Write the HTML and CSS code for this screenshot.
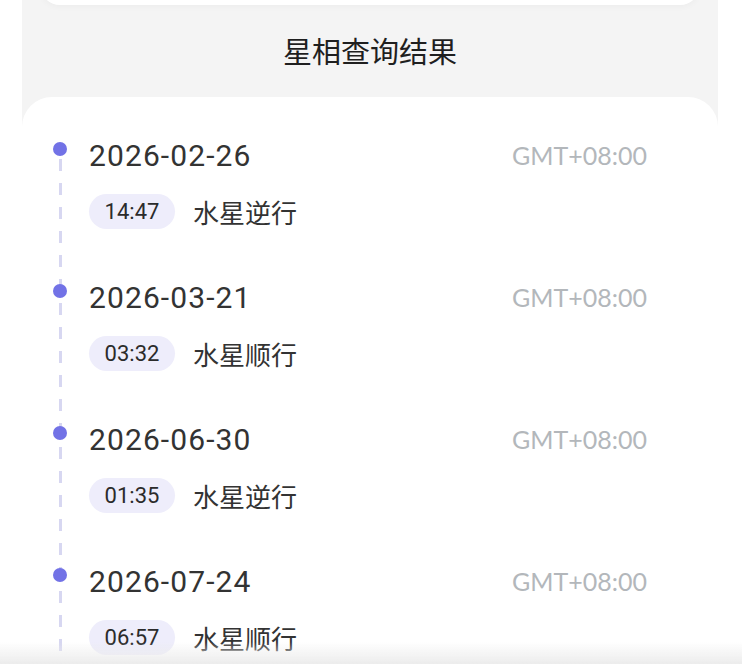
FILE: index.html
```html
<!DOCTYPE html>
<html>
<head>
<meta charset="utf-8">
<meta name="viewport" content="width=device-width, initial-scale=1.0">
<title>星相查询结果</title>
<link rel="stylesheet" href="styles.css">
</head>
<body>
<div id="wrapper">
  <div class="prevCard"></div>
  <h1>星相查询结果</h1>
  <div class="resultCard">
    <div class="timeline">
      <div class="item">
        <span class="dot"></span>
        <div class="dateRow">
          <span class="date">2026-02-26</span>
          <span class="zone">GMT+08:00</span>
        </div>
        <div class="infoRow">
          <span class="time">14:47</span>
          <span class="event">水星逆行</span>
        </div>
      </div>
      <div class="item">
        <span class="dot"></span>
        <div class="dateRow">
          <span class="date">2026-03-21</span>
          <span class="zone">GMT+08:00</span>
        </div>
        <div class="infoRow">
          <span class="time">03:32</span>
          <span class="event">水星顺行</span>
        </div>
      </div>
      <div class="item">
        <span class="dot"></span>
        <div class="dateRow">
          <span class="date">2026-06-30</span>
          <span class="zone">GMT+08:00</span>
        </div>
        <div class="infoRow">
          <span class="time">01:35</span>
          <span class="event">水星逆行</span>
        </div>
      </div>
      <div class="item">
        <span class="dot"></span>
        <div class="dateRow">
          <span class="date">2026-07-24</span>
          <span class="zone">GMT+08:00</span>
        </div>
        <div class="infoRow">
          <span class="time">06:57</span>
          <span class="event">水星顺行</span>
        </div>
      </div>
    </div>
  </div>
</div>
<div class="bottomShade"></div>
</body>
</html>
```

FILE: styles.css
```css
html,body {
  margin: 0px;
  padding: 0px;
  background: #fff;
  font-family: Roboto, "Noto Sans CJK SC", sans-serif;
  color: #333;
  overflow: hidden;
}
#wrapper {
  display: flow-root;
  margin: 0 24px 0 22px;
  background: linear-gradient(#f4f4f4 0, #f4f4f4 128px, #fff 128px);
}
.prevCard {
  margin: -20px 18px 0 18px;
  height: 25px;
  background: #fff;
  border-radius: 0 0 20px 20px;
  box-shadow: 0 2px 6px rgba(0,0,0,0.03);
}
h1 {
  margin: 25px 0 0 0;
  height: 40px;
  line-height: 40px;
  text-align: center;
  font-size: 29px;
  font-weight: normal;
  color: #1f1f1f;
  font-family: "Noto Sans CJK SC", sans-serif;
}
.resultCard {
  margin-top: 27px;
  background: #fff;
  border-radius: 30px 30px 0 0;
  padding: 38px 71px 0 31px;
}
.timeline {
  background: repeating-linear-gradient(to bottom, #d7d7f1 0, #d7d7f1 12px, transparent 12px, transparent 24px) 6px 24px / 3px 100% no-repeat;
}
.item {
  display: grid;
  grid-template-columns: 14px 1fr;
  column-gap: 22px;
  padding-bottom: 47px;
}
.dot {
  grid-row: 1;
  grid-column: 1;
  align-self: center;
  width: 14px;
  height: 14px;
  margin-top: -12px;
  border-radius: 50%;
  background: #7272e6;
}
.dateRow {
  grid-column: 2;
  display: flex;
  justify-content: space-between;
  align-items: center;
  height: 40px;
}
.date {
  font-size: 30px;
  letter-spacing: 1.1px;
  color: #333;
}
.zone {
  font-family: Lato, sans-serif;
  font-size: 25px;
  color: #b3b7bb;
}
.infoRow {
  grid-column: 2;
  display: flex;
  align-items: center;
  margin-top: 18px;
}
.time {
  display: inline-block;
  width: 86px;
  height: 35px;
  line-height: 35px;
  text-align: center;
  border-radius: 18px;
  background: #eeedfb;
  font-size: 22px;
  color: #2b2b2b;
}
.event {
  margin-left: 18px;
  font-size: 26px;
  font-family: "Noto Sans CJK SC", sans-serif;
}
.bottomShade {
  position: fixed;
  left: 0px;
  right: 0px;
  bottom: 0px;
  height: 22px;
  background: linear-gradient(rgba(236,236,236,0), #ececec);
}
```
